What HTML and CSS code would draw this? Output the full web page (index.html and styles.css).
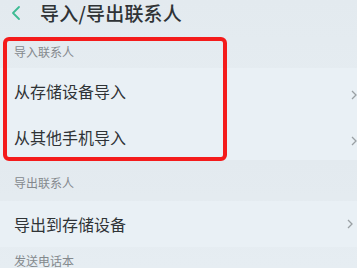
FILE: index.html
```html
<!DOCTYPE html>
<html lang="zh">
<head>
<meta charset="utf-8">
<link rel="stylesheet" href="styles.css">
</head>
<body>
<div class="page">
  <header class="topbar">
    <svg class="back" width="10" height="16" viewBox="0 0 10 16"><path d="M8 2 L2 8 L8 14" fill="none" stroke="#3dbb93" stroke-width="1.8" stroke-linecap="round" stroke-linejoin="round"/></svg>
    <h1 class="title">导入/导出联系人</h1>
  </header>
  <div class="group-title first">导入联系人</div>
  <div class="item"><span>从存储设备导入</span><svg class="chev" width="6" height="10" viewBox="0 0 6 10"><path d="M1 1 L5 5 L1 9" fill="none" stroke="#9aa0a4" stroke-width="1.3"/></svg></div>
  <div class="item"><span>从其他手机导入</span><svg class="chev" width="6" height="10" viewBox="0 0 6 10"><path d="M1 1 L5 5 L1 9" fill="none" stroke="#9aa0a4" stroke-width="1.3"/></svg></div>
  <div class="group-title second">导出联系人</div>
  <div class="item"><span>导出到存储设备</span><svg class="chev shift" width="6" height="10" viewBox="0 0 6 10"><path d="M1 1 L5 5 L1 9" fill="none" stroke="#9aa0a4" stroke-width="1.3"/></svg></div>
  <div class="group-title third">发送电话本</div>
  <div class="highlight"></div>
</div>
</body>
</html>
```
FILE: styles.css
```css
html, body {
  margin: 0;
  padding: 0;
}
body {
  width: 357px;
  height: 268px;
  overflow: hidden;
  background: #e6edf2;
  font-family: "Noto Sans CJK SC", "Noto Sans", sans-serif;
}
.page {
  position: relative;
  width: 357px;
  height: 268px;
  overflow: hidden;
  background: linear-gradient(180deg, #e3eaef 0%, #e5ecf1 30%, #e3eaef 60%, #e6edf2 100%);
}
.topbar {
  height: 34px;
  display: flex;
  align-items: center;
  padding-left: 11px;
  box-sizing: border-box;
  padding-top: 1px;
  padding-bottom: 9px;
}
.back {
  display: block;
}
.title {
  margin: 0 0 0 19px;
  font-size: 19px;
  font-weight: 500;
  color: #2f3336;
  line-height: 24px;
  letter-spacing: 0.2px;
}
.group-title {
  padding-left: 14px;
  font-size: 12px;
  line-height: 14px;
  color: #84898d;
}
.group-title.first {
  padding-top: 11px;
  padding-bottom: 9px;
}
.group-title.second {
  padding-top: 16px;
  padding-bottom: 11px;
}
.group-title.third {
  padding-top: 7px;
}
.item {
  height: 46px;
  display: flex;
  align-items: center;
  justify-content: space-between;
  padding-left: 14px;
  padding-right: 0;
  font-size: 16px;
  color: #2f3336;
  background: #e9f0f5;
}
.chev {
  display: block;
  margin-top: 8px;
}
.chev.shift {
  margin-right: 4px;
  margin-top: 0;
}
.highlight {
  position: absolute;
  left: 3px;
  top: 37px;
  width: 224px;
  height: 124px;
  box-sizing: border-box;
  border: 4px solid #f41b1b;
  border-radius: 6px;
}
```
